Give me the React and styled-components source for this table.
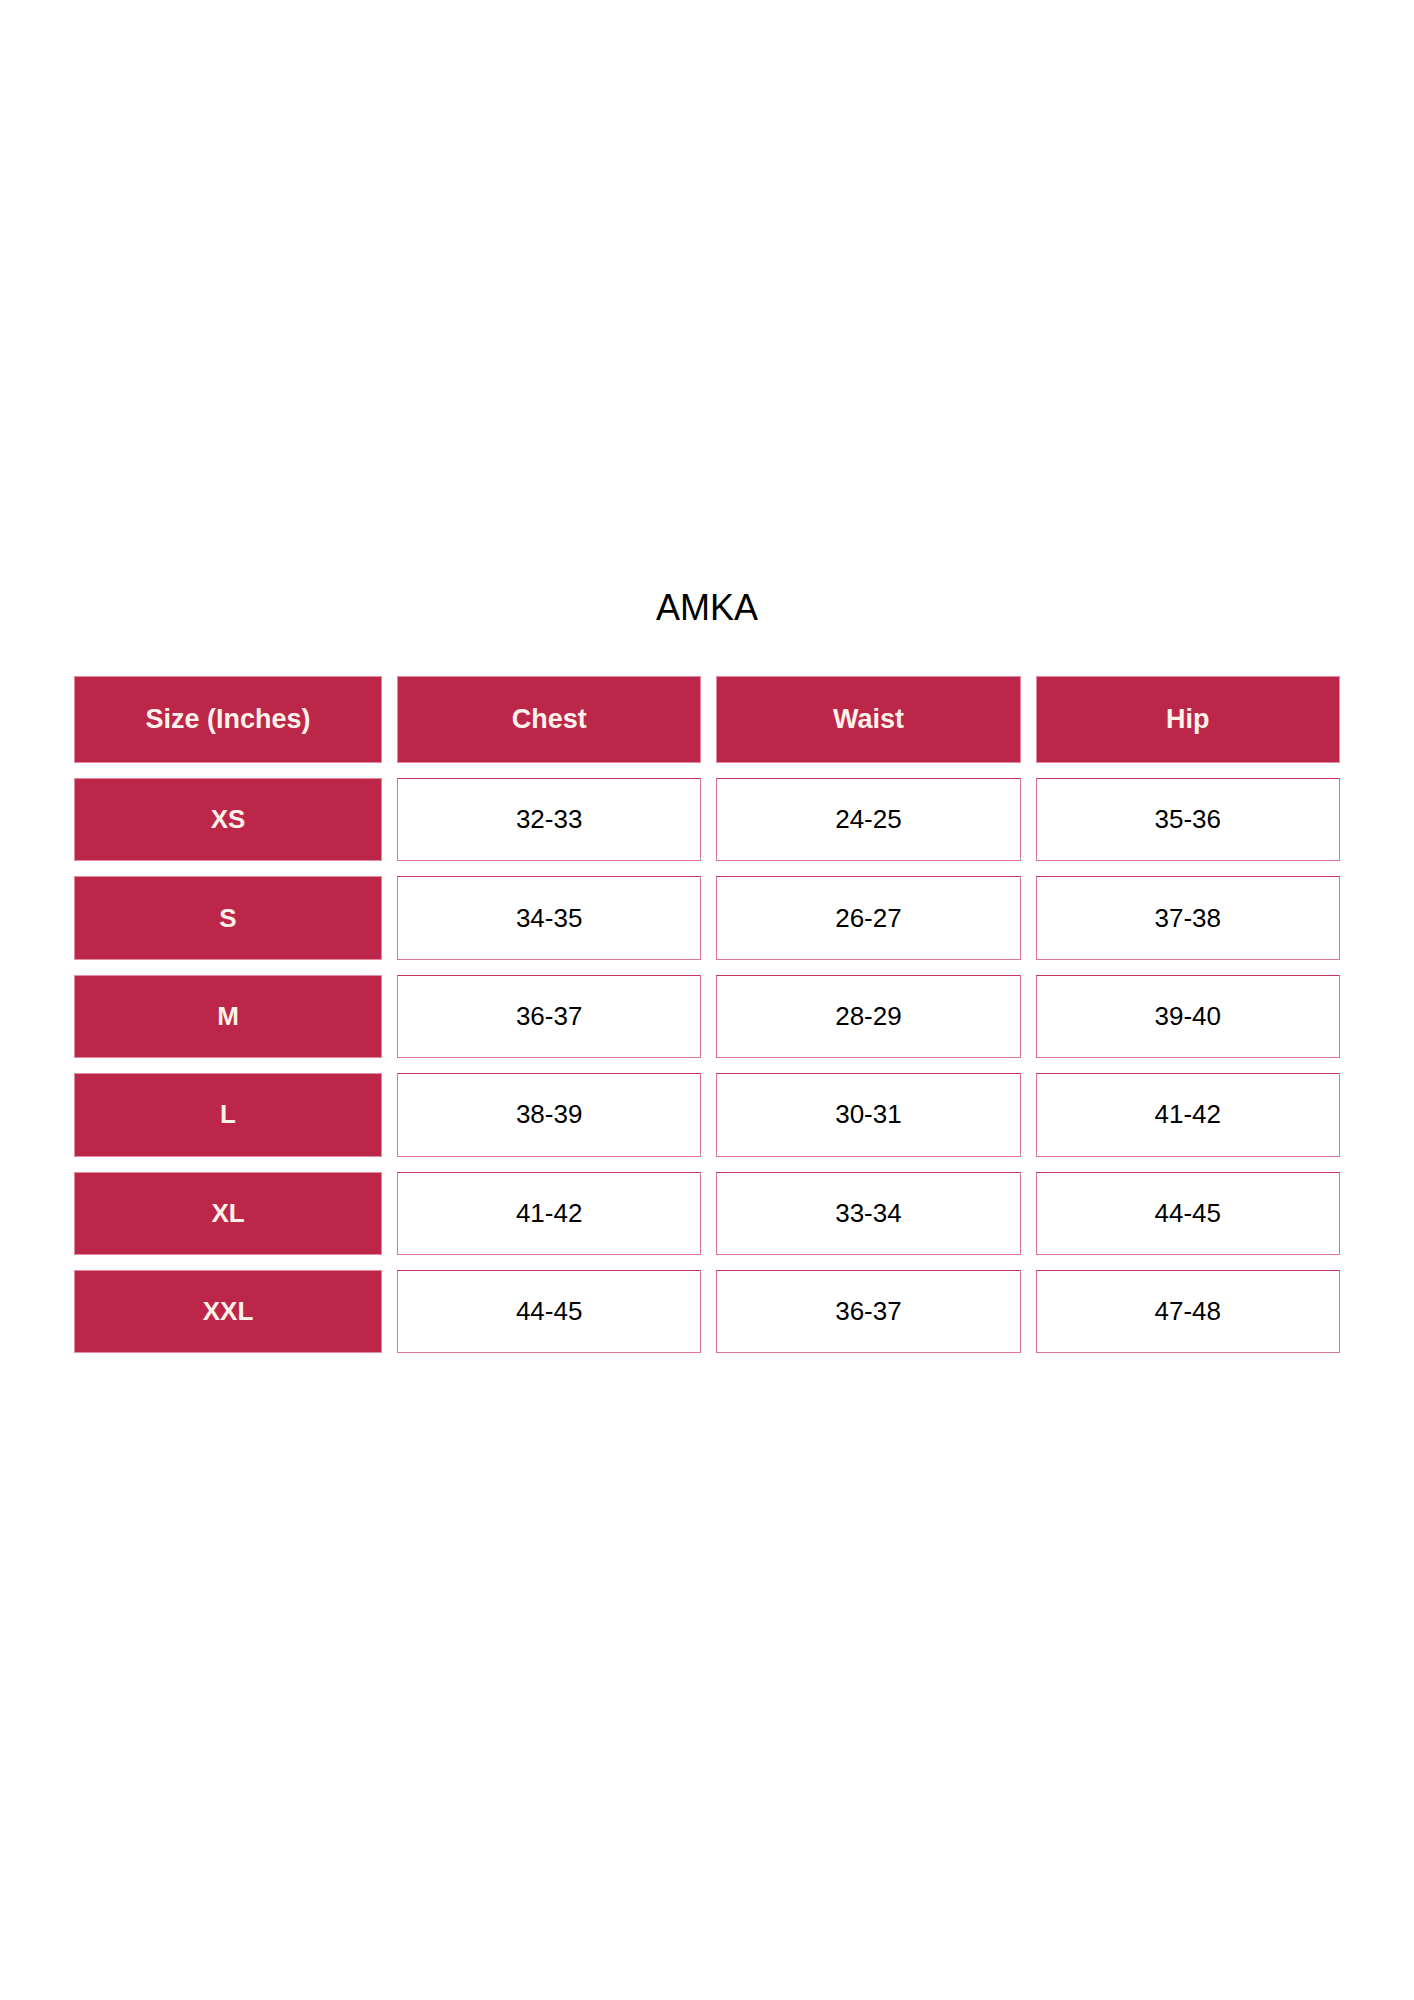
import React from "react";
import styled, { createGlobalStyle } from "styled-components";

const Global = createGlobalStyle`
  html, body { margin: 0; padding: 0; background: #ffffff; }
  body { font-family: "Liberation Sans", Arial, sans-serif; }
`;

const Page = styled.div`
  width: 1414px;
  min-height: 2000px;
  padding-top: 588px;
  box-sizing: border-box;
  display: flex;
  flex-direction: column;
  align-items: center;
`;

const Title = styled.h1`
  margin: 0 0 48px;
  font-family: "Liberation Sans", Arial, sans-serif;
  font-weight: 400;
  font-size: 36px;
  line-height: 40px;
  color: #000;
`;

const Table = styled.div`
  display: grid;
  grid-template-columns: 308px repeat(3, 304.3px);
  grid-template-rows: 87px repeat(6, 83.4px);
  gap: 15px;
  width: 1266px;
`;

const Cell = styled.div`
  display: flex;
  align-items: center;
  justify-content: center;
  box-sizing: border-box;
  font-family: "Liberation Sans", Arial, sans-serif;
  ${(p) =>
    p.$filled
      ? `
    background: #bc2649;
    color: #fdf1e9;
    font-weight: 700;
    font-size: ${p.$head ? 27 : 26}px;
    border: 1px solid #e58aa3;
  `
      : `
    background: #ffffff;
    color: #000000;
    font-size: 26px;
    border: 1.5px solid #dc7593;
    border-top-color: #c9365c;
  `}
`;

const headers = ["Size (Inches)", "Chest", "Waist", "Hip"];
const rows = [
  ["XS", "32-33", "24-25", "35-36"],
  ["S", "34-35", "26-27", "37-38"],
  ["M", "36-37", "28-29", "39-40"],
  ["L", "38-39", "30-31", "41-42"],
  ["XL", "41-42", "33-34", "44-45"],
  ["XXL", "44-45", "36-37", "47-48"],
];

export default function App() {
  return (
    <>
      <Global />
      <Page>
        <Title>AMKA</Title>
        <Table>
          {headers.map((h) => (
            <Cell key={h} $filled $head>
              {h}
            </Cell>
          ))}
          {rows.map((r) =>
            r.map((v, i) => (
              <Cell key={r[0] + i} $filled={i === 0}>
                {v}
              </Cell>
            ))
          )}
        </Table>
      </Page>
    </>
  );
}
